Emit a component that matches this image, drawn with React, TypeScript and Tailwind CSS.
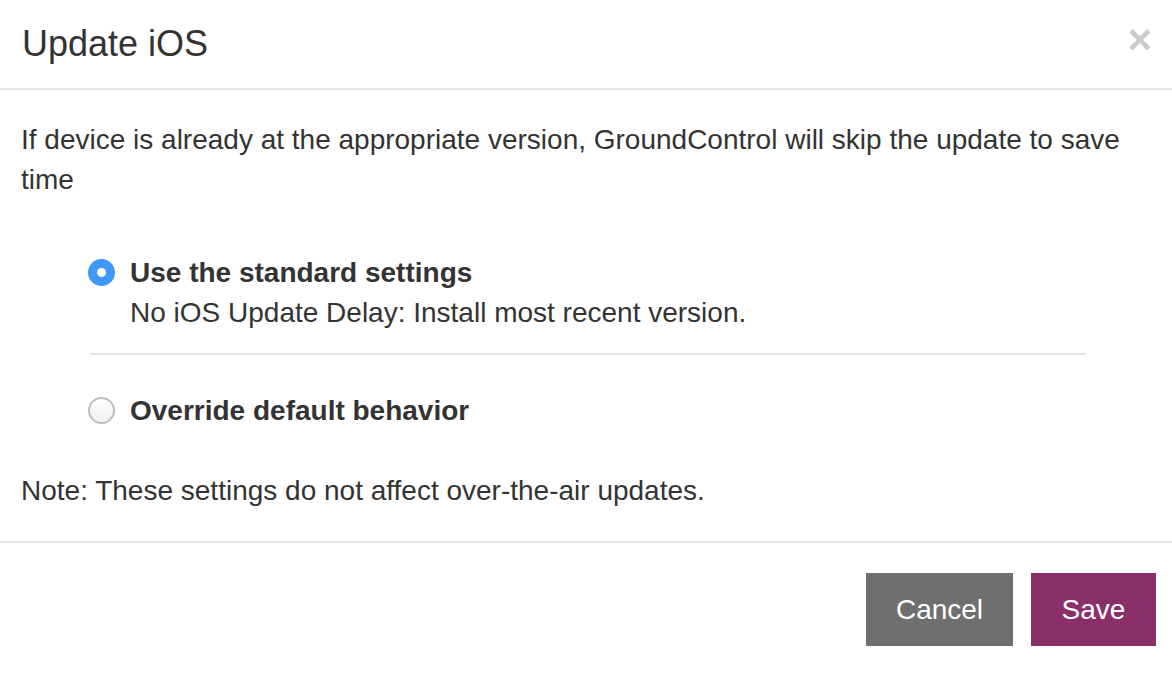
import React, { useState } from 'react';

const font = { fontFamily: '"Liberation Sans", Arial, Helvetica, sans-serif' };

const Radio: React.FC<{ checked: boolean }> = ({ checked }) =>
    checked ? (
        <span className="flex h-[27px] w-[27px] shrink-0 items-center justify-center rounded-full bg-[#3f97f6]">
            <span className="block h-[9px] w-[9px] rounded-full bg-white" />
        </span>
    ) : (
        <span className="block h-[27px] w-[27px] shrink-0 rounded-full border-2 border-[#bdbdbd] bg-gradient-to-b from-white to-[#f0f0f0]" />
    );

const App: React.FC = () => {
    const [mode, setMode] = useState<'standard' | 'override'>('standard');

    return (
        <div className="w-[1172px] h-[676px] bg-white text-[#333333]" style={font}>
            {/* Header */}
            <div className="flex h-[90px] items-center justify-between border-b-2 border-[#e5e5e5] pl-[22px] pr-[20px]">
                <h4 className="text-[36px] leading-[40px] font-normal">Update iOS</h4>
                <button className="text-[42px] leading-none font-bold text-black opacity-20 -mt-[8px]" aria-label="Close">
                    ×
                </button>
            </div>

            {/* Body */}
            <div className="border-b-2 border-[#e5e5e5] px-[21px] pt-[30px] pb-[30px] text-[28px] leading-[40px]">
                <p>If device is already at the appropriate version, GroundControl will skip the update to save time</p>

                <div className="ml-[67px] mt-[53px] w-[998px]">
                    <label className="flex cursor-pointer items-start gap-[15px]" onClick={() => setMode('standard')}>
                        <span className="block shrink-0 pt-[6px]"><Radio checked={mode === 'standard'} /></span>
                        <span className="block">
                            <span className="block font-bold">Use the standard settings</span>
                            <span className="block">No iOS Update Delay: Install most recent version.</span>
                        </span>
                    </label>

                    <hr className="mt-[20px] ml-[2px] border-t-2 border-[#e5e5e5]" />

                    <label className="mt-[36px] flex cursor-pointer items-start gap-[15px]" onClick={() => setMode('override')}>
                        <span className="block shrink-0 pt-[6px]"><Radio checked={mode === 'override'} /></span>
                        <span className="block font-bold">Override default behavior</span>
                    </label>
                </div>

                <p className="mt-[40px]">Note: These settings do not affect over-the-air updates.</p>
            </div>

            {/* Footer */}
            <div className="flex justify-end gap-[18px] pt-[30px] pr-[16px]">
                <button className="h-[73px] w-[147px] bg-[#6f6f6f] text-[28px] text-white">Cancel</button>
                <button className="h-[73px] w-[125px] bg-[#8b2f6b] text-[28px] text-white">Save</button>
            </div>
        </div>
    );
};

export default App;
